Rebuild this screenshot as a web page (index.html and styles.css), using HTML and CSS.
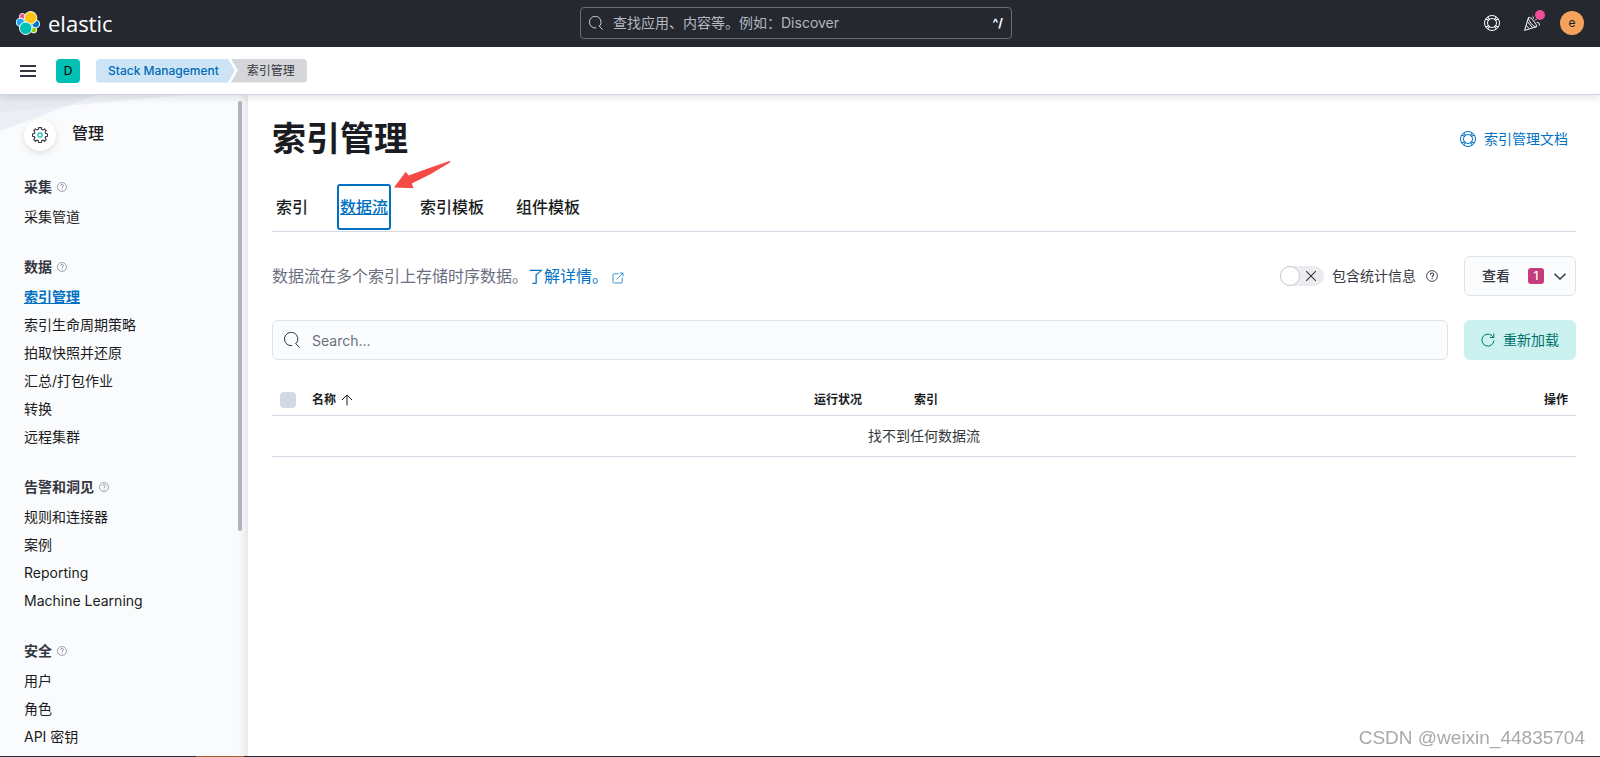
FILE: index.html
```html
<!DOCTYPE html>
<html lang="zh-CN">
<head>
<meta charset="utf-8">
<title>索引管理 - Elastic</title>
<link rel="stylesheet" href="styles.css">
</head>
<body>
<svg class="sprite" aria-hidden="true">
  <symbol id="ring" viewBox="0 0 16 16">
    <g fill="none" stroke="currentColor"><circle cx="8" cy="8" r="7.500"/><circle cx="8" cy="8" r="4.500"/>
    <path d="M2 3.700l3 2.100M3.700 2l2.100 3M14 3.700l-3 2.100M12.300 2l-2.100 3M2 12.300l3-2.100M3.700 14l2.100-3M14 12.300l-3-2.100M12.300 14l-2.100-3" stroke-width="1.100"/></g>
  </symbol>
  <symbol id="question" viewBox="0 0 16 16">
    <g fill="none" stroke="currentColor"><circle cx="8" cy="8" r="7.2" stroke-width="1.2"/><path d="M5.8 6.2c0-1.4 1-2.2 2.3-2.2s2.2.8 2.2 2c0 1.600-2.200 1.700-2.200 3.500" stroke-width="1.400"/></g><circle cx="8.100" cy="11.500" r=".9" fill="currentColor"/>
  </symbol>
  <symbol id="magnifier" viewBox="0 0 16 16">
    <path d="M8.200 13.600A6.700 6.700 0 1 1 12 11.600M11.300 11.200L15.600 15.600" fill="none" stroke="currentColor"/>
  </symbol>
</svg>
<div class="shell">
  <header class="topbar">
    <a class="brand" href="#" aria-label="Elastic">
      <svg class="brand-mark" viewBox="0 0 32 32" aria-hidden="true">
        <g stroke="#fff" stroke-width="1.300">
          <circle cx="8.600" cy="7.300" r="4" fill="#f04e98"/>
          <circle cx="5.800" cy="15" r="5.400" fill="#1ba9f5"/>
          <circle cx="23.600" cy="25.300" r="4" fill="#93c90e"/>
          <circle cx="26.400" cy="17.300" r="5.200" fill="#0077cc"/>
          <circle cx="19.500" cy="9" r="8.300" fill="#fec514"/>
          <circle cx="13" cy="23" r="8.300" fill="#00bfb3"/>
        </g>
      </svg>
      <span class="brand-name">elastic</span>
    </a>
    <label class="global-search">
      <svg class="icon-14" aria-hidden="true"><use href="#magnifier"/></svg>
      <input type="text" aria-label="查找" placeholder="查找应用、内容等。例如：Discover">
      <span class="shortcut">^/</span>
    </label>
    <div class="top-actions">
      <button class="top-button" aria-label="帮助"><svg class="icon-16" aria-hidden="true"><use href="#ring"/></svg></button>
      <button class="top-button" aria-label="新闻">
        <svg class="icon-16" viewBox="0 0 16 16" fill="none" stroke="currentColor" aria-hidden="true"><path d="M4.500 2.500L.6 15.400l11.900-3.700M4.500 2.500c1.200-.8 3.200.8 5 3.400 2 2.700 3.700 4.800 3 5.800M4.500 2.500c-.3 1.500 1 3.900 2.800 6.100 1.700 2.100 3.700 3.600 5.200 3.100M3.400 6.600l5 6M2.200 10.500l3 3.100M8.500 1.200c1 .6 1.100 1.600.7 2.600M11 5.500l1.500-1.500M12.600 7.600c1.800-.6 3.300.6 2.600 3"/></svg>
        <span class="news-dot"></span>
      </button>
      <button class="top-button" aria-label="账户"><span class="avatar">e</span></button>
    </div>
  </header>
  <div class="subbar">
    <button class="menu-button" aria-label="菜单"><span></span><span></span><span></span></button>
    <button class="space-button">D</button>
    <nav class="crumbs" aria-label="面包屑">
      <a class="crumb crumb-first" href="#">Stack Management</a>
      <span class="crumb crumb-last">索引管理</span>
    </nav>
  </div>
  <div class="body">
    <aside class="sidebar">
      <svg class="backdrop" width="190" height="36" aria-hidden="true"><path d="M0 0H96L0 36Z" fill="#dfe3ec" opacity=".55"/><path d="M0 0H186L0 17Z" fill="#dfe3ec" opacity=".4"/></svg>
      <div class="side-title">
        <span class="side-badge"><svg class="icon-16" viewBox="0 0 16 16" fill="none" aria-hidden="true"><path d="M6.700.6h2.600l.4 1.900 1.300.5 1.600-1 1.600 1.600-1 1.600.5 1.300 1.800.4v2.300l-1.800.4-.5 1.400 1 1.500-1.600 1.700-1.600-1-1.300.5-.4 1.800H6.700l-.4-1.800-1.300-.5-1.600 1-1.600-1.700 1-1.500-.5-1.400-1.800-.4V6.900l1.800-.4.5-1.300-1-1.600L3.400 2l1.600 1 1.300-.5z" stroke="#343741" stroke-width="1.100"/><circle cx="8" cy="8" r="2.200" stroke="#00bfb3" stroke-width="1.200"/></svg></span>
        <h2>管理</h2>
      </div>
      <nav class="side-nav" aria-label="管理">
        <section>
          <h3>采集 <svg class="icon-10" aria-hidden="true"><use href="#question"/></svg></h3>
          <a href="#">采集管道</a>
        </section>
        <section>
          <h3>数据 <svg class="icon-10" aria-hidden="true"><use href="#question"/></svg></h3>
          <a class="selected" href="#">索引管理</a>
          <a href="#">索引生命周期策略</a>
          <a href="#">拍取快照并还原</a>
          <a href="#">汇总/打包作业</a>
          <a href="#">转换</a>
          <a href="#">远程集群</a>
        </section>
        <section>
          <h3>告警和洞见 <svg class="icon-10" aria-hidden="true"><use href="#question"/></svg></h3>
          <a href="#">规则和连接器</a>
          <a href="#">案例</a>
          <a href="#">Reporting</a>
          <a href="#">Machine Learning</a>
        </section>
        <section>
          <h3>安全 <svg class="icon-10" aria-hidden="true"><use href="#question"/></svg></h3>
          <a href="#">用户</a>
          <a href="#">角色</a>
          <a href="#">API 密钥</a>
        </section>
      </nav>
      <span class="scroll-thumb"></span>
    </aside>
    <main class="content">
      <div class="page-head">
        <h1>索引管理</h1>
        <a class="docs-link" href="#"><svg class="icon-16" aria-hidden="true"><use href="#ring"/></svg>索引管理文档</a>
      </div>
      <div class="tabs" role="tablist">
        <button class="tab" role="tab">索引</button>
        <div class="tab-wrap">
          <button class="tab tab-active" role="tab" aria-selected="true">数据流</button>
          <svg class="arrow" viewBox="0 0 58 30" aria-hidden="true"><path d="M0 27.500L11.800 11.700 14.600 15.400Q35 8 55.500 1 57 1.200 56 2.400 38 14 17.800 23.500L19.500 28.200Z" fill="#f54a45"/></svg>
        </div>
        <button class="tab" role="tab">索引模板</button>
        <button class="tab" role="tab">组件模板</button>
      </div>
      <div class="intro">
        <p>数据流在多个索引上存储时序数据。<a href="#">了解详情。<svg class="icon-12 external" viewBox="0 0 12 12" fill="none" stroke="currentColor" aria-hidden="true"><path d="M6.500 1.700H2.200Q1 1.700 1 2.900v6.900Q1 11 2.200 11h6.900q1.200 0 1.200-1.200V5.600M4.500 7.500L11 1M7.600 1H11v3.400"/></svg></a></p>
        <div class="stats">
          <label class="switch"><input type="checkbox"><span class="track"><span class="thumb"></span><svg class="cross" viewBox="0 0 10 10" aria-hidden="true"><path d="M0 0L10 10M10 0L0 10" stroke="currentColor" stroke-width="1.100"/></svg></span>包含统计信息</label>
          <svg class="icon-12" aria-hidden="true"><use href="#question"/></svg>
        </div>
        <button class="view-button">查看<span class="count">1</span><svg class="chevron" viewBox="0 0 12 7" fill="none" aria-hidden="true"><path d="M.5.700L6 6 11.500.700" stroke="currentColor" stroke-width="1.500"/></svg></button>
      </div>
      <div class="search-row">
        <label class="table-search"><svg class="icon-16" aria-hidden="true"><use href="#magnifier"/></svg><input type="text" aria-label="搜索" placeholder="Search..."></label>
        <button class="reload-button"><svg class="icon-14" viewBox="0 0 14 14" fill="none" stroke="currentColor" aria-hidden="true"><path d="M12.900 7.500A6 6 0 1 1 11 2.700L12.600 4.400M12.800.6V4.500H9"/></svg>重新加载</button>
      </div>
      <table class="streams">
        <colgroup><col class="col-check"><col class="col-name"><col class="col-health"><col><col class="col-actions"></colgroup>
        <thead>
          <tr>
            <th><input type="checkbox" class="select-all" aria-label="全选" disabled></th>
            <th>名称 <svg class="sort" viewBox="0 0 12 12" fill="none" stroke="currentColor" aria-hidden="true"><path d="M6 11.500V1M1 6L6 1l5 5"/></svg></th>
            <th>运行状况</th>
            <th>索引</th>
            <th class="right">操作</th>
          </tr>
        </thead>
        <tbody><tr><td colspan="5">找不到任何数据流</td></tr></tbody>
      </table>
    </main>
  </div>
</div>
<div class="watermark">CSDN @weixin_44835704</div>
<div class="edge"></div>
</body>
</html>
```
FILE: styles.css
```css
* { box-sizing: border-box; }
body { margin: 0; font: 14px/20px Inter, "Noto Sans CJK SC", sans-serif; color: #343741; background: #fff; }
h1, h2, h3, p { margin: 0; }
a { color: #0071c2; text-decoration: none; }
button, input { font: inherit; color: inherit; }
button { border: 0; padding: 0; background: none; cursor: pointer; }
.sprite { position: absolute; width: 0; height: 0; }
.icon-10 { width: 10px; height: 10px; }
.icon-12 { width: 12px; height: 12px; }
.icon-14 { width: 14px; height: 14px; }
.icon-16 { width: 16px; height: 16px; }
svg { flex: none; }

.shell { height: 100vh; display: flex; flex-direction: column; overflow: hidden; }

.topbar { flex: none; height: 47px; padding: 0 8px 1px 0; display: grid; grid-template-columns: 1fr auto 1fr; align-items: center; background: #25282f; color: #fff; }
.brand { display: flex; align-items: center; gap: 8px; padding-left: 16px; color: #fff; }
.brand-mark { width: 24px; height: 24px; }
.brand-name { font: 400 22px/24px "Open Sans", "Noto Sans", sans-serif; }
.global-search { width: 432px; height: 32px; display: flex; align-items: center; gap: 10px; padding: 0 8px; border: 1px solid #6b6d72; border-radius: 4px; color: #dfe5ef; }
.global-search input { flex: 1; min-width: 0; border: 0; padding: 0; background: none; outline: 0; }
.global-search input::placeholder { color: #b3b7c0; opacity: 1; }
.shortcut { font-size: 12px; font-weight: 700; color: #fff; }
.top-actions { display: flex; justify-content: flex-end; }
.top-button { position: relative; width: 40px; height: 40px; display: flex; align-items: center; justify-content: center; }
.news-dot { position: absolute; top: 7px; right: 7px; width: 10px; height: 10px; border-radius: 50%; background: #f04e98; }
.avatar { width: 24px; height: 24px; border-radius: 50%; background: #f5a35c; color: #1a1c21; font-size: 12px; line-height: 24px; }

.subbar { position: relative; z-index: 2; flex: none; height: 48px; display: flex; align-items: center; padding: 0 20px; background: #fff; border-bottom: 1px solid #cdd4e3; box-shadow: 0 2px 8px rgba(0, 0, 0, .12); }
.menu-button { width: 16px; display: flex; flex-direction: column; gap: 3px; }
.menu-button span { height: 2px; background: #343741; }
.space-button { width: 24px; height: 24px; margin: 0 16px 0 20px; border-radius: 4px; background: #00bfb3; color: #000; font-size: 12px; }
.crumbs { display: flex; font-size: 12px; line-height: 24px; }
.crumb { height: 24px; }
.crumb-first { padding: 0 16px 0 12px; font-weight: 500; color: #006bb8; background: #cce4f5; border-radius: 4px 0 0 4px; clip-path: polygon(0 0, calc(100% - 7px) 0, 100% 50%, calc(100% - 7px) 100%, 0 100%); }
.crumb-last { margin-left: -4px; padding: 0 12px 0 16px; background: #d4d6d9; border-radius: 0 4px 4px 0; clip-path: polygon(0 0, 100% 0, 100% 100%, 0 100%, 7px 50%); }

.body { flex: 1; min-height: 0; display: flex; }
.sidebar { position: relative; flex: none; width: 248px; padding: 24px 24px 0; overflow: hidden; background: linear-gradient(to right, #fafbfd calc(100% - 10px), #e9eaed); }
.backdrop { position: absolute; top: 0; left: 0; }
.side-title { position: relative; display: flex; align-items: flex-start; gap: 16px; margin-bottom: 24px; }
.side-badge { width: 32px; height: 32px; display: flex; align-items: center; justify-content: center; border-radius: 50%; background: #fff; box-shadow: 0 2px 6px rgba(0, 0, 0, .12); }
.side-title h2 { font-size: 16px; line-height: 28px; font-weight: 500; color: #1a1c21; }
.side-nav section { margin-bottom: 24px; display: flex; flex-direction: column; align-items: flex-start; }
.side-nav h3 { display: flex; align-items: center; gap: 5px; margin-bottom: 4px; font-size: 14px; line-height: 24px; font-weight: 600; }
.side-nav h3 svg { color: #82868f; }
.side-nav a { line-height: 20px; padding: 4px 0; color: #1a1c21; }
.side-nav .selected { color: #0071c2; font-weight: 600; text-decoration: underline; }
.scroll-thumb { position: absolute; top: 6px; right: 6px; width: 4px; height: 430px; border-radius: 2px; background: #b2b4bb; }

.content { flex: 1; min-width: 0; padding: 24px; }
.page-head { display: flex; align-items: center; justify-content: space-between; margin-bottom: 24px; }
.page-head h1 { font-size: 34px; line-height: 40px; font-weight: 700; color: #1a1c21; }
.docs-link { display: flex; align-items: center; gap: 8px; padding-right: 8px; }
.tabs { display: flex; gap: 24px; border-bottom: 1px solid #d3dae6; margin-bottom: 24px; }
.tab { height: 48px; padding: 0 4px; font-size: 16px; line-height: 24px; font-weight: 500; color: #1a1c21; }
.tab-wrap { position: relative; }
.tab-active { color: #0071c2; text-decoration: underline; outline: 2px solid #0071c2; outline-offset: -3px; border-radius: 4px; }
.arrow { position: absolute; left: 58px; top: -23px; width: 58px; height: 30px; }
.intro { display: flex; align-items: center; margin-bottom: 24px; }
.intro p { flex: 1; font-size: 16px; line-height: 24px; color: #69707d; }
.external { margin-left: 4px; vertical-align: -2px; opacity: .75; }
.stats { display: flex; align-items: center; gap: 10px; margin-right: 26px; }
.switch { display: flex; align-items: center; gap: 8px; }
.switch input { position: absolute; opacity: 0; }
.track { width: 44px; height: 20px; display: flex; align-items: center; justify-content: space-between; padding-right: 8px; border-radius: 10px; background: #ebecf0; }
.thumb { width: 20px; height: 20px; border: 1px solid #c8cad0; border-radius: 50%; background: #fff; }
.cross { width: 10px; height: 10px; }
.view-button { width: 112px; height: 40px; display: flex; align-items: center; padding: 0 9px 0 17px; border: 1px solid #e0e3ee; border-radius: 6px; background: #fbfcfd; font-weight: 500; }
.count { width: 16px; height: 16px; margin: 0 10px 0 auto; border-radius: 3px; background: #c43d7b; color: #fff; font-size: 12px; line-height: 16px; text-align: center; }
.chevron { width: 12px; height: 7px; }
.search-row { display: flex; gap: 16px; margin-bottom: 24px; }
.table-search { flex: 1; height: 40px; display: flex; align-items: center; gap: 12px; padding: 0 11px; border: 1px solid #e0e3ee; border-radius: 6px; background: #fbfcfd; }
.table-search input { flex: 1; border: 0; padding: 2px 0 0; background: none; outline: 0; }
.table-search input::placeholder { color: #69707d; opacity: 1; }
.reload-button { width: 112px; height: 40px; display: flex; align-items: center; justify-content: center; gap: 8px; border-radius: 6px; background: #ccf2f0; color: #00726b; }
.streams { width: 100%; table-layout: fixed; border-collapse: separate; border-spacing: 0; }
.col-check { width: 32px; }
.col-name { width: 38.5%; }
.col-health { width: 100px; }
.col-actions { width: 100px; }
.streams th { height: 32px; padding: 0 8px; border-bottom: 1px solid #d3dae6; font-size: 12px; line-height: 16px; font-weight: 600; text-align: left; color: #1a1c21; }
.streams .right { text-align: right; }
.streams td { height: 41px; padding: 0 8px; border-bottom: 1px solid #d3dae6; text-align: center; }
.select-all { appearance: none; display: block; width: 16px; height: 16px; margin: 0; border-radius: 4px; background: #d3dae6; }
.sort { width: 12px; height: 12px; margin-left: 2px; vertical-align: -2px; }

.watermark { position: fixed; right: 15px; bottom: 7px; z-index: 3; font: 19px/24px "Liberation Sans", sans-serif; color: #a9a9a9; text-shadow: -1px -1px 0 #fff; }
.edge { position: fixed; left: 0; right: 0; bottom: 0; z-index: 3; height: 1px; background: linear-gradient(to right, #232b33 196px, #9a6233 196px, #9a6233 244px, #232530 244px); }
```
